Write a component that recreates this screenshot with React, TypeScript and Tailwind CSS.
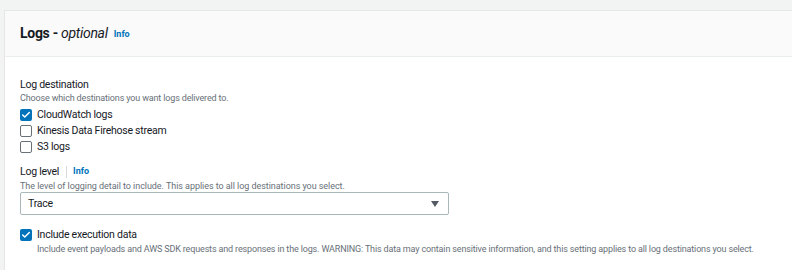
import { Check } from "lucide-react"

function Box({ checked }: { checked?: boolean }) {
  return checked ? (
    <span className="w-[12px] h-[12px] rounded-[2px] bg-[#0073bb] flex items-center justify-center shrink-0">
      <Check className="w-[10px] h-[10px] text-white" strokeWidth={3.5} />
    </span>
  ) : (
    <span className="w-[12px] h-[12px] rounded-[2px] border border-[#687078] bg-white shrink-0" />
  )
}

export default function App() {
  const dests = [
    { label: "CloudWatch logs", checked: true },
    { label: "Kinesis Data Firehose stream", checked: false },
    { label: "S3 logs", checked: false },
  ]

  return (
    <div className="w-[792px] h-[270px] bg-[#f2f3f3] pt-[10px] pl-[4px] overflow-hidden font-['Roboto',sans-serif] text-[#16191f]">
      <div className="bg-white border-l border-t border-[#e5e7e7] h-[300px]">
        <div className="h-[46px] bg-[#fafafa] border-b border-[#eaeded] flex items-center pl-[15px]">
          <h2 className="text-[14px] font-bold tracking-[-0.3px]">
            Logs - <span className="italic font-normal">optional</span>
          </h2>
          <span className="ml-[6px] mt-[2px] text-[9px] font-bold text-[#0073bb]">Info</span>
        </div>

        <div className="pl-[15px] pt-[21px] tracking-[-0.25px]">
          <div className="text-[10.5px] leading-[14px]">Log destination</div>
          <div className="text-[9px] leading-[12px] tracking-[-0.15px] text-[#687078]">Choose which destinations you want logs delivered to.</div>
          <div className="flex flex-col mt-[3px]">
            {dests.map((d) => (
              <label key={d.label} className="flex items-center gap-[5px] h-[16px] text-[10.5px]">
                <Box checked={d.checked} />
                <span>{d.label}</span>
              </label>
            ))}
          </div>

          <div className="flex items-center mt-[9px] h-[16px] text-[10.5px]">
            <span>Log level</span>
            <span className="ml-[7px] mr-[6px] w-px h-[12px] bg-[#d5dbdb]" />
            <span className="text-[9px] font-bold tracking-normal text-[#0073bb]">Info</span>
          </div>
          <div className="text-[9px] leading-[12px] tracking-[-0.05px] text-[#687078]">
            The level of logging detail to include. This applies to all log destinations you select.
          </div>
          <div className="w-[429px] h-[23px] border border-[#aab7b8] rounded-[2px] flex items-center justify-between pl-[7px] pr-[9px] text-[10.5px]">
            <span>Trace</span>
            <svg width="8" height="6" viewBox="0 0 8 6">
              <path d="M0 0h8L4 6z" fill="#545b64" />
            </svg>
          </div>

          <div className="mt-[12px] flex items-center gap-[5px] text-[10.5px] h-[16px]">
            <Box checked />
            <span>Include execution data</span>
          </div>
          <div className="pl-[17px] text-[9px] leading-[12px] tracking-[-0.15px] text-[#687078] whitespace-nowrap">
            Include event payloads and AWS SDK requests and responses in the logs. WARNING: This data may contain sensitive information, and this setting applies to all log destinations you select.
          </div>
        </div>
      </div>
    </div>
  )
}
